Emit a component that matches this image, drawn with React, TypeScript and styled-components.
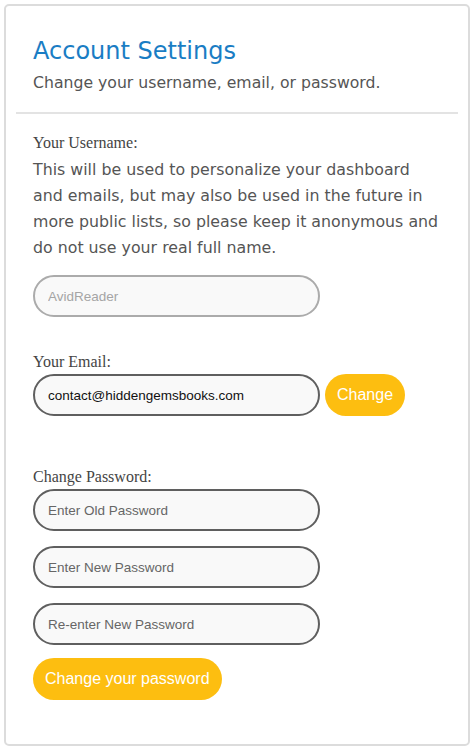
import React from 'react'
import styled, { createGlobalStyle } from 'styled-components'

const GlobalStyle = createGlobalStyle`
  html, body {
    margin: 0;
    padding: 0;
    background: #fff;
  }
  body {
    padding: 4px;
  }
`

const AccountSettings = () => (
  <Card>
    <GlobalStyle />
    <Header>
      <Title>Account Settings</Title>
      <Subtitle>Change your username, email, or password.</Subtitle>
    </Header>
    <Divider />
    <Body>
      <Section>
        <Label>Your Username:</Label>
        <Help>
          This will be used to personalize your dashboard and emails, but may
          also be used in the future in more public lists, so please keep it
          anonymous and do not use your real full name.
        </Help>
        <Input placeholder="AvidReader" $muted />
      </Section>

      <Section $gap={36}>
        <Label>Your Email:</Label>
        <Row>
          <Input defaultValue="contact@hiddengemsbooks.com" />
          <Button>Change</Button>
        </Row>
      </Section>

      <Section $gap={52}>
        <Label>Change Password:</Label>
        <Stack>
          <Input type="password" placeholder="Enter Old Password" />
          <Input type="password" placeholder="Enter New Password" />
          <Input type="password" placeholder="Re-enter New Password" />
        </Stack>
        <Button $wide>Change your password</Button>
      </Section>
    </Body>
  </Card>
)

export default AccountSettings

const Card = styled.div`
  box-sizing: border-box;
  width: 466px;
  height: 742px;
  border: 2px solid #dcdcdc;
  border-radius: 5px;
  padding: 0 10px;
  background: #fff;
`

const Header = styled.div`
  padding: 30px 17px 18px;
`

const Title = styled.h1`
  margin: 0;
  font-family: 'DejaVu Sans', sans-serif;
  font-weight: 400;
  font-size: 24px;
  line-height: 30px;
  color: #1a7dc4;
`

const Subtitle = styled.p`
  margin: 6px 0 0;
  font-family: 'DejaVu Sans', sans-serif;
  font-size: 15.7px;
  line-height: 22px;
  color: #555;
`

const Divider = styled.hr`
  margin: 0;
  border: none;
  border-top: 2px solid #e3e3e3;
`

const Body = styled.div`
  padding: 20px 17px 0;
`

const Section = styled.div<{ $gap?: number }>`
  margin-top: ${p => p.$gap ?? 0}px;
  display: flex;
  flex-direction: column;
  align-items: flex-start;
`

const Label = styled.div`
  font-family: 'Liberation Serif', serif;
  font-size: 16px;
  line-height: 18px;
  color: #444;
`

const Help = styled.p`
  margin: 5px 0 14px;
  font-family: 'DejaVu Sans', sans-serif;
  font-size: 15.8px;
  line-height: 26px;
  color: #555;
`

const Row = styled.div`
  display: flex;
  align-items: center;
  gap: 5px;
  margin-top: 3px;
`

const Stack = styled.div`
  display: flex;
  flex-direction: column;
  gap: 15px;
  margin-top: 3px;
`

const Input = styled.input<{ $muted?: boolean }>`
  box-sizing: border-box;
  width: 287px;
  height: 42px;
  padding: 0 13px;
  border: 2px solid ${p => (p.$muted ? '#ababab' : '#5f5f5f')};
  border-radius: 21px;
  background: #f9f9f9;
  font-family: 'Liberation Sans', Arial, sans-serif;
  font-size: 13.5px;
  color: #111;
  outline: none;

  &::placeholder {
    color: ${p => (p.$muted ? '#a5a5a5' : '#666')};
  }
`

const Button = styled.button<{ $wide?: boolean }>`
  height: 42px;
  padding: 0 12px;
  margin-top: ${p => (p.$wide ? 13 : 0)}px;
  border: none;
  border-radius: 21px;
  background: #fdbe10;
  color: #fff;
  font-family: 'Liberation Sans', Arial, sans-serif;
  font-size: 16px;
  cursor: pointer;
`
